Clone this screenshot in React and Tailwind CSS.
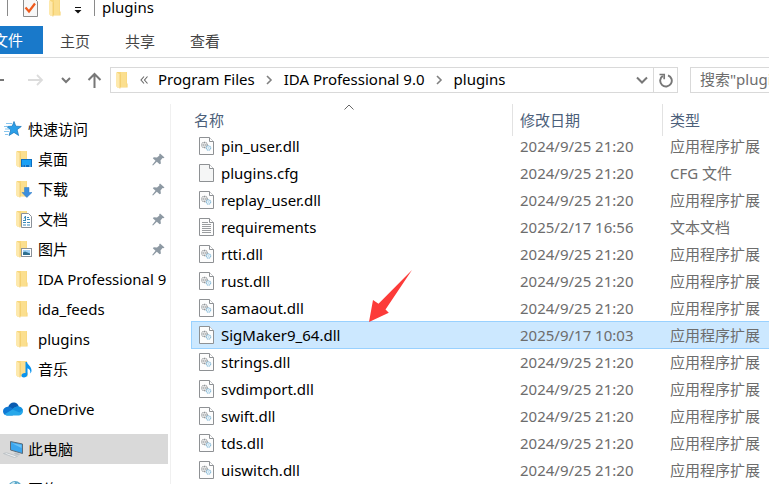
const files = [
  { name: "pin_user.dll", date: "2024/9/25 21:20", type: "应用程序扩展", icon: "dll" },
  { name: "plugins.cfg", date: "2024/9/25 21:20", type: "CFG 文件", icon: "blank" },
  { name: "replay_user.dll", date: "2024/9/25 21:20", type: "应用程序扩展", icon: "dll" },
  { name: "requirements", date: "2025/2/17 16:56", type: "文本文档", icon: "text" },
  { name: "rtti.dll", date: "2024/9/25 21:20", type: "应用程序扩展", icon: "dll" },
  { name: "rust.dll", date: "2024/9/25 21:20", type: "应用程序扩展", icon: "dll" },
  { name: "samaout.dll", date: "2024/9/25 21:20", type: "应用程序扩展", icon: "dll" },
  { name: "SigMaker9_64.dll", date: "2025/9/17 10:03", type: "应用程序扩展", icon: "dll", selected: true },
  { name: "strings.dll", date: "2024/9/25 21:20", type: "应用程序扩展", icon: "dll" },
  { name: "svdimport.dll", date: "2024/9/25 21:20", type: "应用程序扩展", icon: "dll" },
  { name: "swift.dll", date: "2024/9/25 21:20", type: "应用程序扩展", icon: "dll" },
  { name: "tds.dll", date: "2024/9/25 21:20", type: "应用程序扩展", icon: "dll" },
  { name: "uiswitch.dll", date: "2024/9/25 21:20", type: "应用程序扩展", icon: "dll" },
]

const quickAccess = [
  { name: "桌面", overlay: "desktop", pinned: true },
  { name: "下载", overlay: "download", pinned: true },
  { name: "文档", overlay: "document", pinned: true },
  { name: "图片", overlay: "picture", pinned: true },
  { name: "IDA Professional 9" },
  { name: "ida_feeds" },
  { name: "plugins" },
  { name: "音乐", overlay: "music" },
]

function FolderIcon({ overlay }) {
  return (
    <svg width="16" height="18" viewBox="0 0 16 18" className="shrink-0">
      <path d="M1 1h10v11.500h.6v4H1z" fill="#f7d67a" />
      <path d="M5 1h5.500v15H5z" fill="#fbdf8f" />
      <path d="M0 1l4 2.500V17.500L0 15.500z" fill="#fee9ac" />
      <path d="M4 3.500V17.500" stroke="#eec662" strokeWidth=".7" />
      {overlay === "desktop" && (
        <>
          <rect x="5" y="9" width="11" height="8" fill="#0a6fc2" />
          <rect x="6" y="10" width="9" height="5" fill="#1ba1f5" />
          <path d="M6.500 16h1M9 16h1M13 16h2" stroke="#bfe3fb" strokeWidth=".8" />
        </>
      )}
      {overlay === "download" && (
        <path d="M8.500 7.500h4.500v5h3L10.800 17.500 6 12.500h2.500z" fill="#3b8ede" stroke="#2b78c6" strokeWidth=".5" />
      )}
      {overlay === "document" && (
        <>
          <path d="M5.500 3.500h7l3 3v11h-10z" fill="#fff" stroke="#8a9199" />
          <path d="M8 8.500l1.500-2.500v4M7 10.500h3M11 7.500h2M11 9.500h3M7 12.500h3M11 12.500h3M7 15h3M11 15h3" stroke="#3b8ab8" strokeWidth="1" fill="none" />
        </>
      )}
      {overlay === "picture" && (
        <>
          <rect x="5.500" y="8.500" width="10" height="8" fill="#fff" stroke="#8a9199" />
          <rect x="7" y="10" width="7" height="5" fill="#9fd0f5" />
          <path d="M7 12.500l2-1 5 2V15H7z" fill="#2f6f8f" />
        </>
      )}
      {overlay === "music" && (
        <path d="M9.500 2h1.500c.3 3 4.800 4 4.500 9-.3 1.500-.8 2-1.300 2.400.6-3-.7-4.400-2.700-5.200v6.300c-.2 2-2 3-3.600 3-1.500 0-2.400-.8-2.400-2 0-1.600 1.800-2.800 4-2.500z" fill="#0a93ee" />
      )}
    </svg>
  )
}

function FileIcon({ kind }) {
  return (
    <svg width="15" height="18" viewBox="0 0 15 18" className="shrink-0">
      <path d="M.5.500h10l4 4v13H.5z" fill={kind === "blank" ? "#f5f6f6" : "#fdfdfd"} stroke="#8e9194" />
      <path d="M10.500.500v4h4" fill="#fff" stroke="#8e9194" />
      {kind === "dll" && (
        <>
          <circle cx="5.500" cy="8" r="2.700" fill="none" stroke="#8c9093" strokeWidth="1.200" strokeDasharray="1.200 .5" />
          <circle cx="5.500" cy="8" r="1.100" fill="none" stroke="#9a9ea1" strokeWidth=".8" />
          <circle cx="9.500" cy="11" r="2.200" fill="#edf6fb" stroke="#86bad8" strokeWidth="1.100" strokeDasharray="1.200 .5" />
          <circle cx="9.500" cy="11" r=".8" fill="#b4d5e6" />
        </>
      )}
      {kind === "text" && (
        <path d="M3 4.500h6M3 6.500h9M3 8.500h9M3 10.500h9M3 12.500h9M3 14.500h9" stroke="#9a9da0" />
      )}
    </svg>
  )
}

function PinIcon() {
  return (
    <svg width="13" height="13" viewBox="0 0 13 13" className="shrink-0">
      <path d="M8 .5l4.500 4-1.200.8-.8-.2-2 2.300.4 3-1.200.9-2.900-2.600L1 12.500l-.8-.5 3.300-4.200L.8 5.200l1-1 3.200.3 2.400-2-.2-1.100z" fill="#8d99a3" />
    </svg>
  )
}

function StarIcon() {
  return (
    <svg width="20" height="18" viewBox="0 0 20 18" className="shrink-0">
      <path d="M11 1.500l1.800 4.700 5.500.3-4.200 3.200 1.500 5.800-4.600-3.100-5 3.100 1.700-5.600L3.700 6.500l5.500-.3z" fill="#2b9fe8" stroke="#1473b8" strokeWidth=".7" />
      <path d="M3 3.500h6M1 6.500h4M2 9h4M1 11.500h5M2 14.500h3" stroke="#7cc0ec" strokeWidth=".9" />
    </svg>
  )
}

function CloudIcon() {
  return (
    <svg width="20" height="14" viewBox="0 0 20 14" className="shrink-0">
      <path d="M5 5.500C6 1.500 9 0 11.500.500c2.500.5 3.800 2 4.300 4.300L10 8z" fill="#0a5bb0" />
      <path d="M4 13.500C1.500 13.500 0 11.500 0 9.300 0 7 2 5 4.500 4.800c2-.2 3.500.6 5 1.600l5 3.100-5 4z" fill="#0f78d4" />
      <path d="M9.500 7.500c1.500-2 3.500-3 6-2.900C18.500 4.800 20 7 20 9.300c0 2-1.500 4.200-4 4.200H4c-1 0-2-.5-2.500-1.200z" fill="#28a8ea" />
      <path d="M9.500 7.500c1.500-2 3.500-3 6-2.900l.8.2c1.800.5 3 1.700 3.500 3.200l-3.300 2.500z" fill="#1490df" />
    </svg>
  )
}

function ComputerIcon() {
  return (
    <svg width="20" height="18" viewBox="0 0 20 18" className="shrink-0">
      <path d="M7.500 1.500l12 2.500v9.500l-12-3.500z" fill="#3aa5ee" stroke="#5b6b78" />
      <path d="M8.500 3l10 2v3z" fill="#6cc2f7" />
      <path d="M12 12.500l5 1.500-1 1.500-5-1.500z" fill="#b7bec4" />
      <path d="M.5 13.500l3-.7 11 3.500-3 1.200z" fill="#eef0f1" stroke="#b4babf" strokeWidth=".8" />
    </svg>
  )
}

function GlobeIcon() {
  return (
    <svg width="20" height="18" viewBox="0 0 20 18" className="shrink-0">
      <circle cx="12" cy="8" r="7" fill="#5eaacb" />
      <path d="M7 5c2-3 4-3 5-3l-1 3-3 2zM14 3l3 2v3l-3-1z" fill="#d5edf5" />
      <path d="M0 9l9 2v5l-9-2z" fill="#2f8fd0" />
    </svg>
  )
}

function Crumb({ children }) {
  return <button type="button" className="pb-0.5 whitespace-nowrap">{children}</button>
}

function CrumbArrow() {
  return (
    <svg width="7" height="10" viewBox="0 0 7 10" className="mx-[11px] shrink-0">
      <path d="M1 1l4 4-4 4" fill="none" stroke="#808080" strokeWidth="1.600" />
    </svg>
  )
}

function TitleBar() {
  return (
    <div className="pb-[10px]">
      <div className="flex h-4 items-center">
        <span className="ml-[7px] h-4 w-px bg-[#8a8a8a]" />
        <svg width="15" height="20" viewBox="0 0 15 20" className="ml-[15px]">
          <path d="M.5.500h11l3 3v15H.5z" fill="#f7f7f7" stroke="#8b8b8b" />
          <path d="M2.500 9.500l3.500 4 6-8" fill="none" stroke="#ee5a1c" strokeWidth="2.200" />
        </svg>
        <span className="ml-[11px]">
          <FolderIcon />
        </span>
        <svg width="8" height="7" viewBox="0 0 8 7" className="mt-1 ml-[9px]">
          <path d="M1 .5h6" stroke="#111" />
          <path d="M.5 3h7L4 6.500z" fill="#111" />
        </svg>
        <span className="ml-[12px] h-4 w-px bg-[#8a8a8a]" />
        <h1 className="ml-[7px] pb-0.5">plugins</h1>
      </div>
    </div>
  )
}

function RibbonTabs() {
  return (
    <div className="flex h-8 gap-[35px] border-b border-[#dadbdc] text-[#444]">
      <button type="button" className="-ml-[27px] -mr-[18px] h-7 bg-[#1979ca] px-5 text-white">文件</button>
      <button type="button" className="h-7 pt-0.5">主页</button>
      <button type="button" className="h-7 pt-0.5">共享</button>
      <button type="button" className="h-7 pt-0.5">查看</button>
    </div>
  )
}

function AddressBar() {
  return (
    <div className="flex items-center pt-[9px] pb-[11px]">
      <button type="button" aria-label="后退" className="-ml-3">
        <svg width="16" height="14" viewBox="0 0 16 14">
          <path d="M16 7H2M7 1.500L1.500 7 7 12.500" fill="none" stroke="#777" strokeWidth="1.800" />
        </svg>
      </button>
      <button type="button" aria-label="前进" className="ml-6">
        <svg width="16" height="14" viewBox="0 0 16 14">
          <path d="M0 7h14M9 2l5 5-5 5" fill="none" stroke="#dcdcdc" strokeWidth="1.800" />
        </svg>
      </button>
      <button type="button" aria-label="最近浏览的位置" className="ml-[17px]">
        <svg width="10" height="8" viewBox="0 0 10 8">
          <path d="M1 2l4 4 4-4" fill="none" stroke="#777" strokeWidth="2" />
        </svg>
      </button>
      <button type="button" aria-label="上移" className="ml-4">
        <svg width="15" height="16" viewBox="0 0 15 16">
          <path d="M7.500 16V2M1.500 8l6-6 6 6" fill="none" stroke="#777" strokeWidth="2" />
        </svg>
      </button>

      <div className="ml-2 flex h-[26px] min-w-0 flex-1 items-center border border-[#d9d9d9] pl-[5px]">
        <FolderIcon />
        <svg width="8" height="8" viewBox="0 0 8 8" className="ml-2 mr-[10px] shrink-0">
          <path d="M4 .5L1 4l3 3.500M7.500.500l-3 3.500 3 3.500" fill="none" stroke="#666" strokeWidth="1.100" />
        </svg>
        <Crumb>Program Files</Crumb>
        <CrumbArrow />
        <Crumb>IDA Professional 9.0</Crumb>
        <CrumbArrow />
        <Crumb>plugins</Crumb>
        <button type="button" aria-label="上一个位置" className="ml-auto mr-[5px]">
          <svg width="12" height="8" viewBox="0 0 12 8">
            <path d="M1 1.500l5 5 5-5" fill="none" stroke="#777" strokeWidth="2" />
          </svg>
        </button>
        <button type="button" aria-label="刷新" className="flex h-full w-6 items-center justify-center border-l border-[#d9d9d9]">
          <svg width="14" height="15" viewBox="0 0 14 15">
            <path d="M9 2.300a5.800 5.800 0 1 1-5.200.6" fill="none" stroke="#777" strokeWidth="1.900" />
            <path d="M.5 1.500h4.700v4.700" fill="none" stroke="#777" strokeWidth="1.700" />
          </svg>
        </button>
      </div>

      <input
        type="text"
        aria-label="搜索"
        placeholder={'搜索"plugins"'}
        className="ml-3 h-[26px] w-[79px] border border-r-0 border-[#d9d9d9] pb-0.5 pl-[9px] placeholder:text-[#6d6d6d]"
      />
    </div>
  )
}

function Sidebar() {
  return (
    <nav className="w-[171px] shrink-0 overflow-hidden border-r border-[#f0f0f0] pt-[10px] pr-[2px]">
      <a href="#quick" className="flex h-[30px] items-center gap-[5px] pl-[3px]">
        <StarIcon />
        快速访问
      </a>
      <ul>
        {quickAccess.map((item) => (
          <li key={item.name}>
            <a href="#folder" className="flex h-[30px] items-center gap-[6px] overflow-hidden pl-4 pr-[3px]">
              <FolderIcon overlay={item.overlay} />
              <span className="flex-1 whitespace-nowrap">{item.name}</span>
              {item.pinned && <PinIcon />}
            </a>
          </li>
        ))}
      </ul>
      <a href="#onedrive" className="mt-[10px] flex h-[30px] items-center gap-[5px] pl-[3px]">
        <CloudIcon />
        OneDrive
      </a>
      <a href="#pc" className="mt-[10px] flex h-[30px] items-center gap-[5px] bg-[#d9d9d9] pl-[3px]">
        <ComputerIcon />
        此电脑
      </a>
      <a href="#network" className="mt-[10px] flex h-[30px] items-center gap-[5px] pl-[3px]">
        <GlobeIcon />
        网络
      </a>
    </nav>
  )
}

function Arrow() {
  return (
    <svg width="44" height="54" viewBox="0 0 44 54" className="pointer-events-none absolute -top-[52px] left-[177px]">
      <path d="M0 53L4 31l5.500 3.700L43 1 16.500 40.500l3.300 3.200z" fill="#fc3b39" />
    </svg>
  )
}

function FileTable() {
  return (
    <main className="min-w-0 flex-1 pl-5">
      <table className="w-full table-fixed border-separate border-spacing-0 text-left">
        <thead className="text-[#4c607a]">
          <tr className="h-7">
            <th className="relative w-[321px] p-0 pt-1 pl-[3px] font-normal">
              名称
              <svg width="10" height="6" viewBox="0 0 10 6" className="absolute top-0 left-[153px]">
                <path d="M.5 5.500L5 1l4.500 4.500" fill="none" stroke="#666" />
              </svg>
            </th>
            <th className="relative w-[150px] p-0 pt-1 pl-2 font-normal">
              <span className="absolute top-0 left-0 h-8 w-px bg-[#e2e2e2]" />
              修改日期
            </th>
            <th className="relative p-0 pt-1 pl-2 font-normal">
              <span className="absolute top-0 left-0 h-8 w-px bg-[#e2e2e2]" />
              类型
            </th>
          </tr>
        </thead>
        <tbody>
          {files.map((file) => (
            <tr
              key={file.name}
              className={
                file.selected
                  ? "h-[27px] bg-[#cce8ff] [&>td]:shadow-[inset_0_1px_#99d1ff,0_1px_#99d1ff]"
                  : "h-[27px]"
              }
            >
              <td className={file.selected ? "relative border-l border-[#99d1ff] p-0 pl-[7px]" : "p-0 pl-2"}>
                <div className="flex items-center gap-[7px]">
                  <FileIcon kind={file.icon} />
                  {file.name}
                </div>
                {file.selected && <Arrow />}
              </td>
              <td className="p-0 pl-2 whitespace-nowrap text-[#6d6d6d]">{file.date}</td>
              <td className="p-0 pl-2 whitespace-nowrap text-[#6d6d6d]">{file.type}</td>
            </tr>
          ))}
        </tbody>
      </table>
    </main>
  )
}

export default function App() {
  return (
    <div className="flex h-screen flex-col overflow-hidden bg-white font-['Noto_Sans','Noto_Sans_CJK_SC',sans-serif] text-[15px] leading-5 text-black">
      <TitleBar />
      <RibbonTabs />
      <AddressBar />
      <div className="flex min-h-0 flex-1">
        <Sidebar />
        <FileTable />
      </div>
    </div>
  )
}
